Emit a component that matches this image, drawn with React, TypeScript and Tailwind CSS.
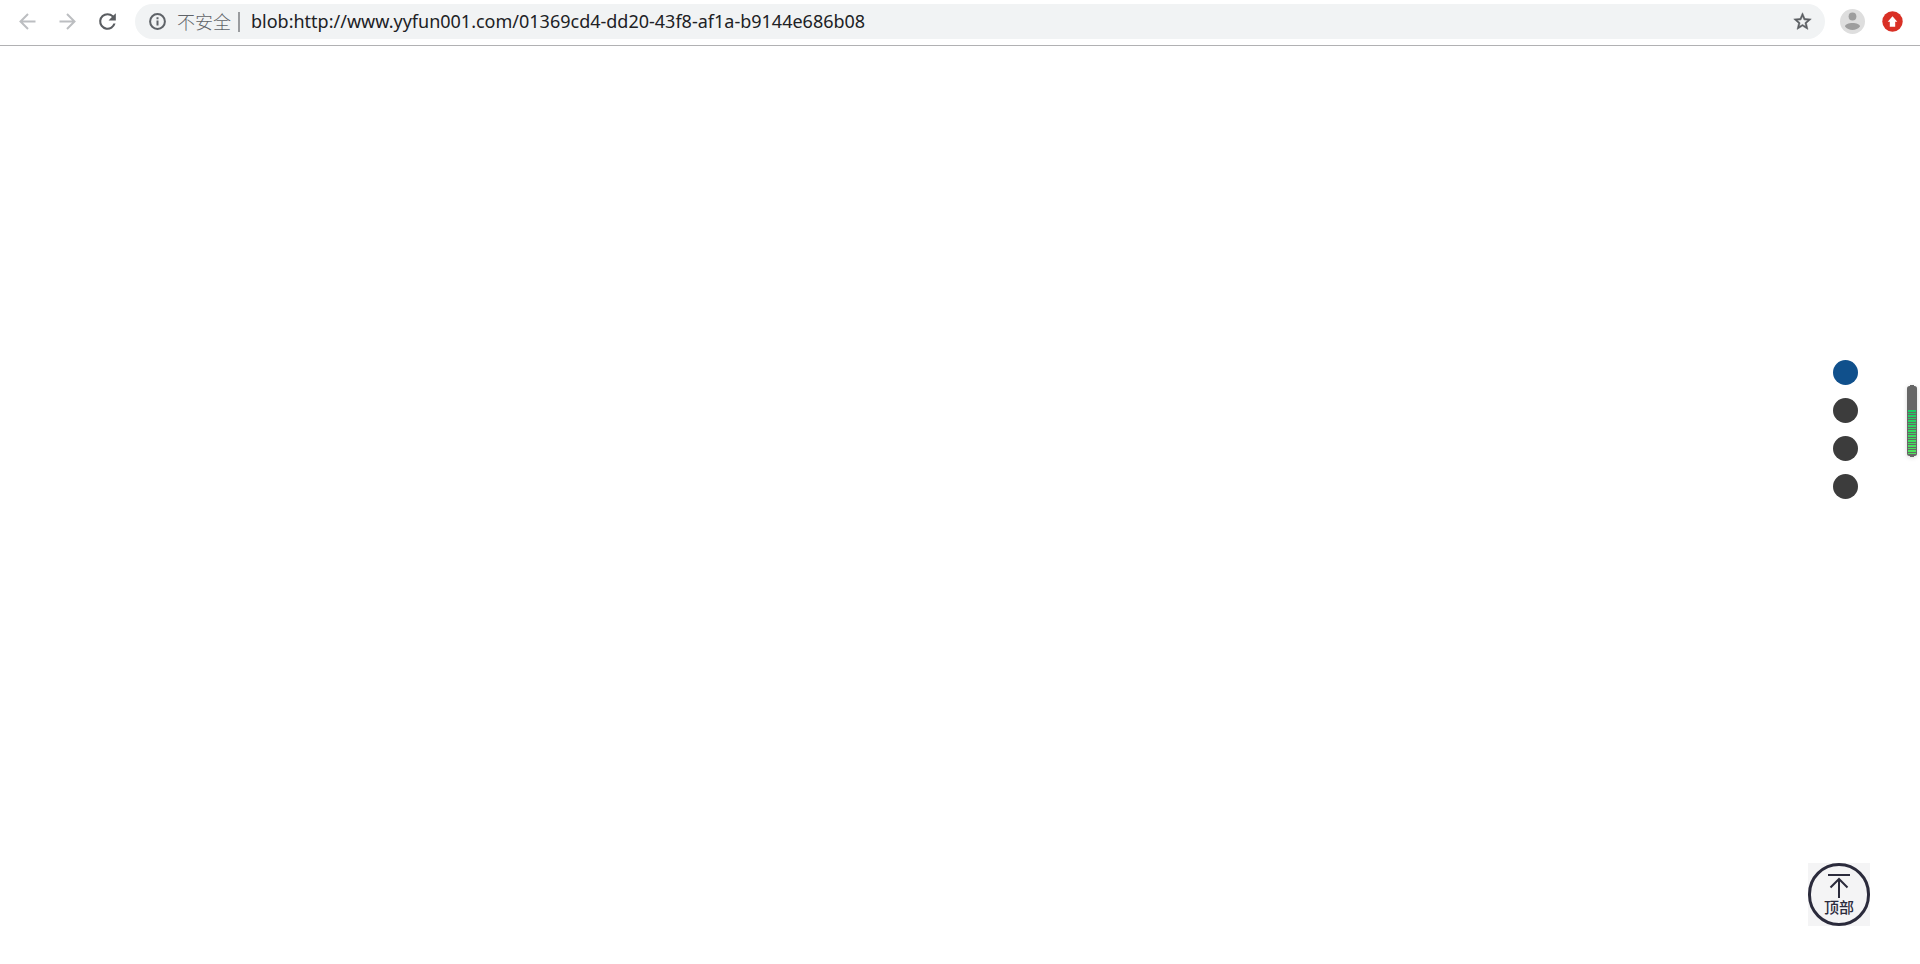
import { useState } from "react";

const sections = ["第一屏", "第二屏", "第三屏", "第四屏"];

function Toolbar() {
  const [url, setUrl] = useState(
    "blob:http://www.yyfun001.com/01369cd4-dd20-43f8-af1a-b9144e686b08"
  );
  return (
    <header className="flex h-[46px] items-center border-b border-[#b1b1b3] bg-white pt-0.5 pr-4 pb-1 pl-[15px]">
      <nav className="flex gap-[15px]" aria-label="浏览">
        <button type="button" aria-label="后退" className="text-[#bcbec1]">
          <svg viewBox="0 0 25 25" className="size-[25px]" fill="none" stroke="currentColor" strokeWidth="2">
            <path d="M20.500 12.500H5.500M13 5l-7.500 7.500L13 20" />
          </svg>
        </button>
        <button type="button" aria-label="前进" className="text-[#bcbec1]">
          <svg viewBox="0 0 25 25" className="size-[25px]" fill="none" stroke="currentColor" strokeWidth="2">
            <path d="M4.500 12.500h15M12 5l7.500 7.500L12 20" />
          </svg>
        </button>
        <button type="button" aria-label="重新加载" className="text-[#5a5d61]">
          <svg viewBox="0 0 24 24" className="size-[25px]" fill="currentColor">
            <path d="M17.65 6.35A7.96 7.96 0 0 0 12 4a8 8 0 1 0 7.73 10h-2.08A6 6 0 1 1 12 6c1.66 0 3.14.69 4.22 1.78L13 11h7V4l-2.35 2.35z" />
          </svg>
        </button>
      </nav>
      <form
        className="ml-[15px] flex h-[35px] flex-1 items-center rounded-full bg-[#f1f3f4] px-3"
        onSubmit={(e) => e.preventDefault()}
      >
        <button type="button" className="flex items-center text-[#5f6368]">
          <svg viewBox="0 0 21 21" className="size-[21px]" fill="none" stroke="currentColor" strokeWidth="2">
            <circle cx="10.5" cy="10.5" r="7.4" />
            <path d="M10.500 6.200v2.100M10.500 9.400v5.200" />
          </svg>
          <span className="ml-[9px] text-[18px] leading-6 font-light">不安全</span>
        </button>
        <span className="ml-[7px] h-5 w-0.5 bg-[#9a9c9f]" />
        <input
          aria-label="地址"
          className="ml-[11px] h-6 min-w-0 flex-1 bg-transparent text-[18px] text-[#202124] outline-none"
          value={url}
          onChange={(e) => setUrl(e.target.value)}
          spellCheck={false}
        />
        <button type="button" aria-label="收藏" className="text-[#5a5d61]">
          <svg viewBox="0 0 24 24" className="size-[21px]" fill="currentColor" stroke="currentColor" strokeWidth="0.6">
            <path d="M22 9.24l-7.19-.62L12 2 9.19 8.63 2 9.24l5.46 4.73L5.82 21 12 17.27 18.18 21l-1.63-7.03L22 9.24zM12 15.4l-3.76 2.27 1-4.28-3.32-2.88 4.38-.38L12 6.1l1.71 4.04 4.38.38-3.32 2.88 1 4.28L12 15.4z" />
          </svg>
        </button>
      </form>
      <button type="button" aria-label="用户" className="ml-[15px]">
        <svg viewBox="0 0 25 25" className="size-[25px]">
          <circle cx="12.5" cy="12.5" r="12.5" fill="#dedede" />
          <circle cx="12.5" cy="7.5" r="3.9" fill="#9e9e9e" />
          <path d="M5 17.6c0-2.5 3.7-3.7 7.5-3.7s7.5 1.2 7.5 3.7c-1.7 2.3-4.5 3.5-7.5 3.5S6.700 19.900 5 17.600z" fill="#9e9e9e" />
        </svg>
      </button>
      <button type="button" aria-label="更新" className="mr-px ml-[17px]">
        <svg viewBox="0 0 21 21" className="size-[21px]">
          <circle cx="10.5" cy="10.5" r="10.2" fill="#d93025" />
          <path d="M10.500 5.300l4.800 5.400h-2.100v5H7.800v-5H5.700z" fill="#fff" />
        </svg>
      </button>
    </header>
  );
}

function SectionDots() {
  const [active, setActive] = useState(0);
  return (
    <nav aria-label="页面导航" className="fixed top-[360px] right-[62px] flex flex-col gap-[13px]">
      {sections.map((name, i) => (
        <button
          key={name}
          type="button"
          aria-label={name}
          onClick={() => setActive(i)}
          className={
            i === active
              ? "size-[25px] rounded-full bg-[#10508c]"
              : "size-[25px] rounded-full bg-[#3c3c3c]"
          }
        />
      ))}
    </nav>
  );
}

function Battery() {
  const bars = [
    [25, 2], [28, 1], [30, 2], [33, 1], [35, 2], [38, 1], [40, 2], [43, 1], [45, 2],
    [48, 1], [50, 2], [53, 1], [55, 2], [58, 1], [60, 2], [63, 1], [65, 2], [68, 1],
  ];
  return (
    <svg
      viewBox="0 0 10 72"
      role="img"
      aria-label="电量"
      className="fixed top-[385px] right-[3px] h-[72px] w-[10px] drop-shadow-sm"
    >
      <defs>
        <linearGradient id="charge" gradientUnits="userSpaceOnUse" x1="0" y1="25" x2="0" y2="69">
          <stop offset="0" stopColor="#1acb62" />
          <stop offset="1" stopColor="#4fe65c" />
        </linearGradient>
      </defs>
      <rect x="3" width="4" height="72" fill="#666" />
      <rect y="1" width="10" height="70" rx="2.500" fill="#666" />
      {bars.map(([y, h]) => (
        <rect key={y} x="1" y={y} width="8" height={h} fill="url(#charge)" />
      ))}
    </svg>
  );
}

function BackToTop() {
  return (
    <button
      type="button"
      onClick={() => window.scrollTo({ top: 0 })}
      className="fixed right-[50px] bottom-[38px] bg-[#f4f4f5]"
    >
      <span className="flex h-[63px] w-[62px] flex-col items-center rounded-full border-[3px] border-[#2b2b3c] pt-[7px] text-[#2b2b3c]">
        <svg viewBox="0 0 24 26" className="h-[26px] w-6" fill="none" stroke="currentColor" strokeWidth="2">
          <path d="M1 2h22M12 25V6M3.500 14.500L12 6l8.500 8.500" />
        </svg>
        <span className="text-[15px] leading-4 font-medium">顶部</span>
      </span>
    </button>
  );
}

export default function App() {
  return (
    <div className="min-h-screen bg-white font-['Noto_Sans','Noto_Sans_CJK_SC',sans-serif]" lang="zh-CN">
      <Toolbar />
      <main>
        <SectionDots />
        <Battery />
        <BackToTop />
      </main>
    </div>
  );
}
